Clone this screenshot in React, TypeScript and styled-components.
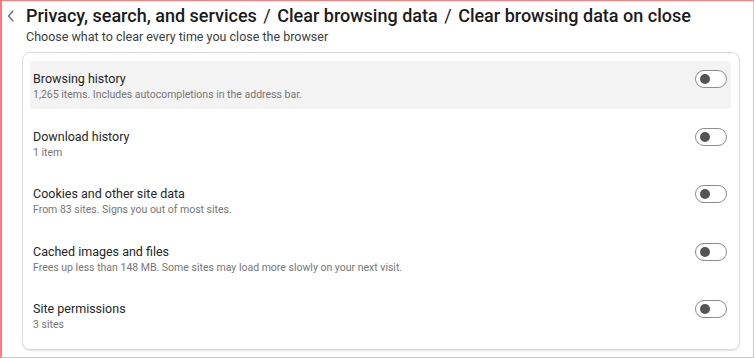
import styled, { createGlobalStyle } from 'styled-components'

const GlobalStyle = createGlobalStyle`
    html, body {
        margin: 0;
        padding: 0;
        background: #ffffff;
    }
    body {
        font-family: Roboto, 'Noto Sans', sans-serif;
        color: #1a1a1a;
    }
`

type Item = {
    title: string
    detail: string
    hovered?: boolean
}

const items: Item[] = [
    { title: 'Browsing history', detail: '1,265 items. Includes autocompletions in the address bar.', hovered: true },
    { title: 'Download history', detail: '1 item' },
    { title: 'Cookies and other site data', detail: 'From 83 sites. Signs you out of most sites.' },
    { title: 'Cached images and files', detail: 'Frees up less than 148 MB. Some sites may load more slowly on your next visit.' },
    { title: 'Site permissions', detail: '3 sites' },
]

const Toggle = () => (
    <Switch>
        <Knob />
    </Switch>
)

export default function App() {
    return (
        <>
            <GlobalStyle />
            <Frame>
                <Header>
                    <BackButton>
                        <svg width="8" height="12" viewBox="0 0 8 12">
                            <polyline points="6,1 1.5,6 6,11" fill="none" stroke="#666" strokeWidth="1.2" strokeLinecap="round" strokeLinejoin="round" />
                        </svg>
                    </BackButton>
                    <Breadcrumb>
                        Privacy, search, and services<Sep>/</Sep>Clear browsing data<Sep>/</Sep>Clear browsing data on close
                    </Breadcrumb>
                </Header>
                <Subtitle>Choose what to clear every time you close the browser</Subtitle>
                <Card>
                    {items.map((item) => (
                        <Row key={item.title} $hovered={item.hovered}>
                            <RowText>
                                <RowTitle>{item.title}</RowTitle>
                                <RowDetail>{item.detail}</RowDetail>
                            </RowText>
                            <Toggle />
                        </Row>
                    ))}
                </Card>
            </Frame>
        </>
    )
}

const Frame = styled.div`
    box-sizing: border-box;
    width: 754px;
    height: 358px;
    border-left: 2px solid #ff7a7a;
    border-top: 1px solid #ff7a7a;
    border-right: 1px solid #f6b4b4;
    border-bottom: 1px solid #f6b4b4;
    padding: 0 13px 0 20px;
    display: flex;
    flex-direction: column;
`
const Header = styled.div`
    display: flex;
    align-items: center;
    height: 29px;
    margin-left: -17px;
`
const BackButton = styled.div`
    width: 18px;
    display: flex;
    align-items: center;
    justify-content: flex-start;
    padding-left: 2px;
    box-sizing: border-box;
    margin-right: 3px;
`
const Breadcrumb = styled.h1`
    margin: 0;
    font-size: 18px;
    font-weight: 500;
    color: #1b1b1b;
    white-space: nowrap;
`
const Sep = styled.span`
    margin: 0 6.5px;
    font-weight: 400;
`
const Subtitle = styled.p`
    margin: 0 0 0 4px;
    font-size: 12.5px;
    line-height: 14px;
    color: #3d3d3d;
`
const Card = styled.div`
    margin-top: 8px;
    box-sizing: border-box;
    width: 718px;
    border: 1px solid #dcdcdc;
    border-radius: 8px;
    box-shadow: 0 1px 1px rgba(0, 0, 0, 0.12);
    padding: 8px 8px 10px 7px;
    display: flex;
    flex-direction: column;
    gap: 9.5px;
`
const Row = styled.div<{ $hovered?: boolean }>`
    height: 48px;
    box-sizing: border-box;
    padding: 10px 4px 0 3px;
    border-radius: 4px;
    background: ${(p) => (p.$hovered ? '#f3f3f3' : 'transparent')};
    display: flex;
    align-items: flex-start;
    justify-content: space-between;
`
const RowText = styled.div`
    display: flex;
    flex-direction: column;
`
const RowTitle = styled.span`
    font-size: 12.5px;
    line-height: 16px;
    color: #262626;
`
const RowDetail = styled.span`
    font-size: 10.5px;
    line-height: 15px;
    color: #767676;
`
const Switch = styled.div`
    box-sizing: border-box;
    width: 32px;
    height: 18px;
    margin-top: -1px;
    border: 1px solid #8c8c8c;
    border-radius: 9px;
    background: #ffffff;
    display: flex;
    align-items: center;
    padding-left: 4px;
`
const Knob = styled.div`
    width: 10px;
    height: 10px;
    border-radius: 50%;
    background: #545454;
`
